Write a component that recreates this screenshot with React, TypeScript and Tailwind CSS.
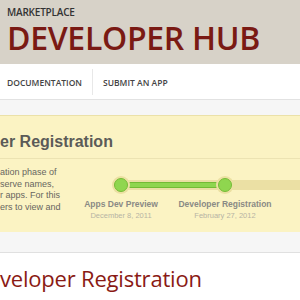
import { FC } from 'react';

const sans = { fontFamily: '"Open Sans", "Liberation Sans", sans-serif' };
const helv = { fontFamily: '"Liberation Sans", Arial, sans-serif' };

const Timeline: FC = () => {
  const stops = [
    { label: 'Apps Dev Preview', date: 'December 8, 2011' },
    { label: 'Developer Registration', date: 'February 27, 2012' },
  ];
  return (
    <div className="w-[231px] shrink-0 mt-[16px]">
      <svg width="231" height="20" viewBox="0 0 231 20" className="block">
        {/* base track */}
        <rect x="52" y="5" width="200" height="10" fill="#ebe0a4" />
        {/* progress */}
        <rect x="52" y="7.5" width="104" height="5" rx="2" fill="#8fd64f" stroke="#74bb35" strokeWidth="1" />
        {[52, 156].map((cx) => (
          <g key={cx}>
            <circle cx={cx} cy="10" r="9" fill="#ebe0a2" />
            <circle cx={cx} cy="10" r="6.5" fill="#8fd64f" stroke="#76bb36" strokeWidth="1" />
          </g>
        ))}
      </svg>
      <div className="flex mt-[4px]">
        {stops.map((s) => (
          <div key={s.label} className="w-[104px] flex flex-col items-center" style={helv}>
            <span className="text-[8.5px] leading-[11px] font-bold text-[#8a8a85] whitespace-nowrap">{s.label}</span>
            <span className="text-[7.5px] leading-[12px] text-[#b7b3a3] whitespace-nowrap">{s.date}</span>
          </div>
        ))}
      </div>
    </div>
  );
};

const App: FC = () => {
  return (
    <div className="w-[300px] h-[300px] overflow-hidden bg-[#f6f6f6]">
      {/* Header */}
      <div className="h-[64px] bg-[#d7d2c8] pl-[7px] pt-[6px]" style={sans}>
        <div className="text-[10px] leading-[13px] font-semibold text-[#333] tracking-[-0.2px]">MARKETPLACE</div>
        <div className="mt-[4px] text-[32px] leading-[30px] font-semibold text-[#7a1a14] tracking-[-0.3px] whitespace-nowrap">
          DEVELOPER HUB
        </div>
      </div>

      {/* Nav */}
      <div className="h-[36px] bg-white border-b border-[#e2e2e2] flex items-center pt-[3px]" style={sans}>
        <div className="pl-[7px] pr-[10px] text-[8.5px] font-semibold text-[#444] whitespace-nowrap">DOCUMENTATION</div>
        <div className="w-px h-[26px] bg-[#e8e8e8] -mt-[3px]" />
        <div className="pl-[10px] text-[8.5px] font-semibold text-[#444] whitespace-nowrap">SUBMIT AN APP</div>
      </div>

      {/* Status panel */}
      <div className="mt-[15px] h-[117px] bg-[#fbf3c3] border-t border-[#ebe1a8]">
        <div className="h-[43px] border-b border-[#ece3b2] flex items-center pt-[10px]" style={helv}>
          <h2 className="text-[16px] font-bold text-[#5b5b58] whitespace-nowrap leading-none">er Registration</h2>
        </div>
        <div className="flex">
          <p className="w-[69px] shrink-0 pt-[8px] text-[9px] leading-[11.7px] text-[#686660] whitespace-nowrap" style={helv}>
            ation phase of
            <br />
            serve names,
            <br />
            r apps. For this
            <br />
            ers to view and
          </p>
          <Timeline />
        </div>
      </div>

      {/* Gap bar */}
      <div className="h-[21px] border-b border-[#e0e0e0]" />

      {/* Main */}
      <div className="bg-white h-[60px] pt-[10px]" style={sans}>
        <h1 className="text-[22px] leading-[30px] text-[#8a1a14] whitespace-nowrap tracking-[-0.2px]">veloper Registration</h1>
      </div>
    </div>
  );
};

export default App;
